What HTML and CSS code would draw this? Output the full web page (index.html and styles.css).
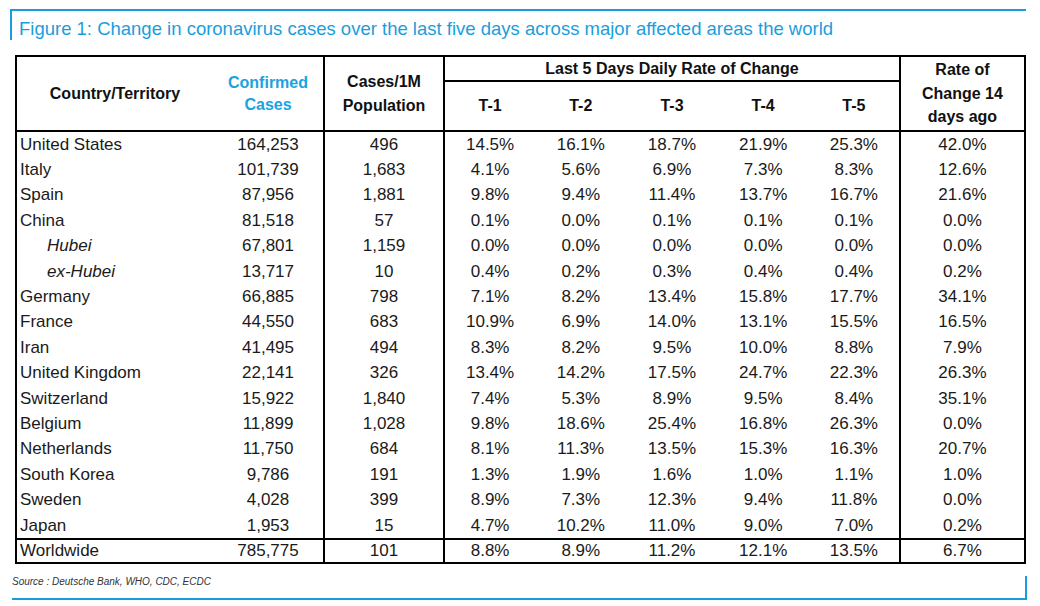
FILE: index.html
```html
<!DOCTYPE html>
<html>
<head>
<meta charset="utf-8">
<link rel="stylesheet" href="styles.css">
</head>
<body>
<div class="head">
  <h1 class="title">Figure 1: Change in coronavirus cases over the last five days across major affected areas the world</h1>
</div>
<table class="data">
  <colgroup>
    <col class="c-country"><col class="c-conf"><col class="c-pop">
    <col class="c-t"><col class="c-t"><col class="c-t"><col class="c-t"><col class="c-t">
    <col class="c-rate">
  </colgroup>
  <thead>
    <tr class="h1">
      <th rowspan="2" class="th-country">Country/Territory</th>
      <th rowspan="2" class="th-conf"><span class="lh22">Confirmed<br>Cases</span></th>
      <th rowspan="2" class="th-pop"><span class="lh23">Cases/1M<br>Population</span></th>
      <th colspan="5" class="th-last">Last 5 Days Daily Rate of Change</th>
      <th rowspan="2" class="th-rate"><span class="lh235">Rate of<br>Change 14<br>days ago</span></th>
    </tr>
    <tr class="h2">
      <th>T-1</th><th>T-2</th><th>T-3</th><th>T-4</th><th>T-5</th>
    </tr>
  </thead>
  <tbody>
    <tr><td class="name">United States</td><td class="b">164,253</td><td class="b">496</td><td>14.5%</td><td>16.1%</td><td>18.7%</td><td>21.9%</td><td>25.3%</td><td class="rate">42.0%</td></tr>
    <tr><td class="name">Italy</td><td class="b">101,739</td><td class="b">1,683</td><td>4.1%</td><td>5.6%</td><td>6.9%</td><td>7.3%</td><td>8.3%</td><td class="rate">12.6%</td></tr>
    <tr><td class="name">Spain</td><td class="b">87,956</td><td class="b">1,881</td><td>9.8%</td><td>9.4%</td><td>11.4%</td><td>13.7%</td><td>16.7%</td><td class="rate">21.6%</td></tr>
    <tr><td class="name">China</td><td class="b">81,518</td><td class="b">57</td><td>0.1%</td><td>0.0%</td><td>0.1%</td><td>0.1%</td><td>0.1%</td><td class="rate">0.0%</td></tr>
    <tr><td class="name sub">Hubei</td><td class="b">67,801</td><td class="b">1,159</td><td>0.0%</td><td>0.0%</td><td>0.0%</td><td>0.0%</td><td>0.0%</td><td class="rate">0.0%</td></tr>
    <tr><td class="name sub">ex-Hubei</td><td class="b">13,717</td><td class="b">10</td><td>0.4%</td><td>0.2%</td><td>0.3%</td><td>0.4%</td><td>0.4%</td><td class="rate">0.2%</td></tr>
    <tr><td class="name">Germany</td><td class="b">66,885</td><td class="b">798</td><td>7.1%</td><td>8.2%</td><td>13.4%</td><td>15.8%</td><td>17.7%</td><td class="rate">34.1%</td></tr>
    <tr><td class="name">France</td><td class="b">44,550</td><td class="b">683</td><td>10.9%</td><td>6.9%</td><td>14.0%</td><td>13.1%</td><td>15.5%</td><td class="rate">16.5%</td></tr>
    <tr><td class="name">Iran</td><td class="b">41,495</td><td class="b">494</td><td>8.3%</td><td>8.2%</td><td>9.5%</td><td>10.0%</td><td>8.8%</td><td class="rate">7.9%</td></tr>
    <tr><td class="name">United Kingdom</td><td class="b">22,141</td><td class="b">326</td><td>13.4%</td><td>14.2%</td><td>17.5%</td><td>24.7%</td><td>22.3%</td><td class="rate">26.3%</td></tr>
    <tr><td class="name">Switzerland</td><td class="b">15,922</td><td class="b">1,840</td><td>7.4%</td><td>5.3%</td><td>8.9%</td><td>9.5%</td><td>8.4%</td><td class="rate">35.1%</td></tr>
    <tr><td class="name">Belgium</td><td class="b">11,899</td><td class="b">1,028</td><td>9.8%</td><td>18.6%</td><td>25.4%</td><td>16.8%</td><td>26.3%</td><td class="rate">0.0%</td></tr>
    <tr><td class="name">Netherlands</td><td class="b">11,750</td><td class="b">684</td><td>8.1%</td><td>11.3%</td><td>13.5%</td><td>15.3%</td><td>16.3%</td><td class="rate">20.7%</td></tr>
    <tr><td class="name">South Korea</td><td class="b">9,786</td><td class="b">191</td><td>1.3%</td><td>1.9%</td><td>1.6%</td><td>1.0%</td><td>1.1%</td><td class="rate">1.0%</td></tr>
    <tr><td class="name">Sweden</td><td class="b">4,028</td><td class="b">399</td><td>8.9%</td><td>7.3%</td><td>12.3%</td><td>9.4%</td><td>11.8%</td><td class="rate">0.0%</td></tr>
    <tr><td class="name">Japan</td><td class="b">1,953</td><td class="b">15</td><td>4.7%</td><td>10.2%</td><td>11.0%</td><td>9.0%</td><td>7.0%</td><td class="rate">0.2%</td></tr>
    <tr class="total"><td class="name">Worldwide</td><td class="b">785,775</td><td class="b">101</td><td>8.8%</td><td>8.9%</td><td>11.2%</td><td>12.1%</td><td>13.5%</td><td class="rate">6.7%</td></tr>
  </tbody>
</table>
<div class="foot">
  <p class="source">Source : Deutsche Bank, WHO, CDC, ECDC</p>
</div>
</body>
</html>
```

FILE: styles.css
```css
html, body {
  margin: 0;
  padding: 0;
  background: #ffffff;
}
body {
  font-family: "Liberation Sans", Arial, sans-serif;
  color: #1a1a1a;
  width: 1040px;
  height: 606px;
  overflow: hidden;
}
.head {
  margin: 9px 0 0 10px;
  width: 1014px;
  height: 29px;
  border-top: 2px solid #1a9edb;
  border-left: 2px solid #1a9edb;
}
.title {
  margin: 0;
  padding: 8px 0 0 7px;
  font-size: 18.5px;
  font-weight: normal;
  line-height: 20px;
  color: #1a9edb;
  white-space: nowrap;
}
.data {
  margin: 15px 0 0 15px;
  width: 1008px;
  border-collapse: collapse;
  border: 2px solid #000;
  table-layout: fixed;
  font-size: 17px;
}
.c-country { width: 197px; }
.c-conf { width: 111px; }
.c-pop { width: 120px; }
.c-t { width: 91.2px; }
.c-rate { width: 125px; }

th {
  font-weight: bold;
  font-size: 16px;
  color: #111;
  text-align: center;
  vertical-align: middle;
  padding: 0;
}
.h1 { height: 25px; }
.h2 { height: 50px; }
.h2 th { border-bottom: 2px solid #000; }
.th-country { border-bottom: 2px solid #000; }
.th-conf { color: #1aa3e0; border-right: 2px solid #000; border-bottom: 2px solid #000; }
.th-pop { border-right: 2px solid #000; border-bottom: 2px solid #000; }
.th-last { border-bottom: 2px solid #000; height: 23px; }
.th-rate { border-left: 2px solid #000; border-bottom: 2px solid #000; }
.lh22 { display: inline-block; line-height: 22px; }
.lh23 { display: inline-block; line-height: 24px; }
.lh235 { display: inline-block; line-height: 23.5px; }

td {
  padding: 0;
  height: 25.4px;
  line-height: 20px;
  text-align: center;
  vertical-align: middle;
  white-space: nowrap;
}
td.name {
  text-align: left;
  padding-left: 3px;
}
td.sub {
  padding-left: 30px;
  font-style: italic;
}
td.b { border-right: 2px solid #000; }
td.rate { border-left: 2px solid #000; }
tr.total td {
  border-top: 2px solid #000;
  height: 22px;
}
.foot {
  margin: 12px 0 0 12px;
  width: 1013px;
  height: 22px;
  border-right: 2px solid #1a9edb;
  border-bottom: 2px solid #1a9edb;
}
.source {
  margin: 0;
  font-size: 10px;
  font-style: italic;
  line-height: 12px;
  color: #333;
}
```
